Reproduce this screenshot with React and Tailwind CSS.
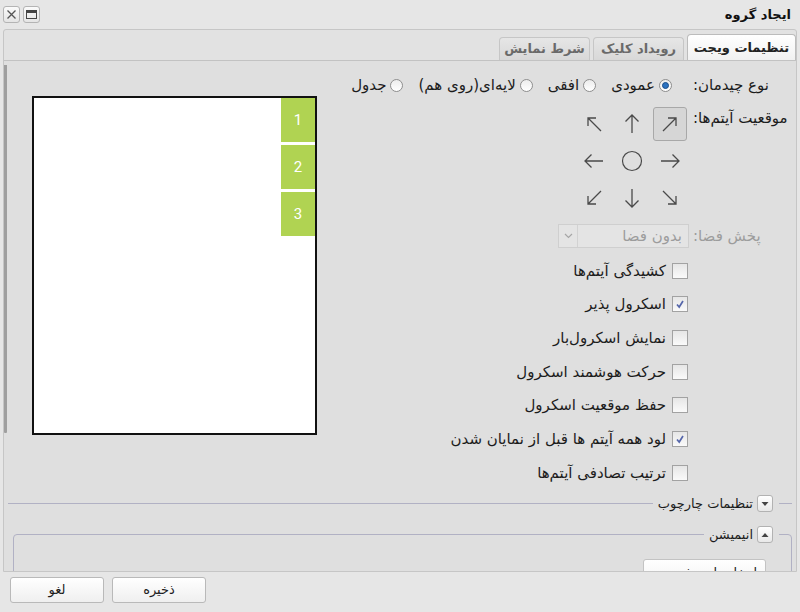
import React from 'react';

const font = "font-['DejaVu_Sans','Noto_Sans',sans-serif]";

const TitleBtn = ({ children }) => (
  <div className="w-[17px] h-[17px] rounded-[3px] border border-[#b4b4b4] bg-gradient-to-b from-[#fbfbfb] to-[#e4e4e4] flex items-center justify-center">
    {children}
  </div>
);

const Tab = ({ active, children }) => (
  <div
    className={
      active
        ? 'h-[26px] w-[109px] rounded-t-[4px] border border-b-0 border-[#bcbcbc] bg-gradient-to-b from-[#ffffff] to-[#f1f1f1] flex items-center justify-center font-bold text-[13px] text-[#222]'
        : 'h-[23px] w-[91px] rounded-t-[4px] border border-b-0 border-[#c6c6c6] bg-gradient-to-b from-[#e6e6e6] to-[#d8d8d8] flex items-center justify-center font-bold text-[13px] text-[#6a6a6a]'
    }
  >
    <span dir="rtl">{children}</span>
  </div>
);

const Radio = ({ checked, label }) => (
  <div className="flex items-center gap-[4px]">
    <div className="w-[13px] h-[13px] rounded-full border border-[#8e8e8e] bg-gradient-to-b from-[#ececec] to-[#ffffff] flex items-center justify-center">
      {checked && <div className="w-[7px] h-[7px] rounded-full bg-[#2c72c0] border border-[#174d8a]" />}
    </div>
    <span>{label}</span>
  </div>
);

const Check = ({ checked, label }) => (
  <div className="h-[33.67px] flex items-center gap-[6px] mr-[103px]">
    <div className="w-[16px] h-[16px] border border-[#a2a2a2] bg-gradient-to-b from-[#e6e6e6] to-[#fafafa] flex items-center justify-center">
      {checked && (
        <svg width="12" height="12" viewBox="0 0 12 12">
          <path d="M3 6.5 L5.2 9 L9 3" fill="none" stroke="#5566aa" strokeWidth="1.7" />
        </svg>
      )}
    </div>
    <span>{label}</span>
  </div>
);

const Arrow = ({ d, selected, circle }) => (
  <div
    className={
      'w-[34px] h-[34px] flex items-center justify-center rounded-[3px] ' +
      (selected ? 'border border-[#a8a8a8] bg-[#d6d6d6]' : '')
    }
  >
    <svg width="22" height="22" viewBox="0 0 22 22">
      {circle ? (
        <circle cx="11" cy="11" r="9.5" fill="none" stroke="#4a4a4a" strokeWidth="1.2" />
      ) : (
        <path d={d} fill="none" stroke="#4a4a4a" strokeWidth="1.3" />
      )}
    </svg>
  </div>
);

const arrows = [
  { d: 'M18 18 L5 5 M5 13 V5 H13' },
  { d: 'M11 20 V2 M4.5 8.5 L11 2 L17.5 8.5' },
  { d: 'M4 18 L17 5 M9 5 H17 V13', selected: true },
  { d: 'M20 11 H2 M8.5 4.5 L2 11 L8.5 17.5' },
  { circle: true },
  { d: 'M2 11 H20 M13.5 4.5 L20 11 L13.5 17.5' },
  { d: 'M18 4 L5 17 M5 9 V17 H13' },
  { d: 'M11 2 V20 M4.5 13.5 L11 20 L17.5 13.5' },
  { d: 'M4 4 L17 17 M17 9 V17 H9' },
];

const Collapse = ({ up }) => (
  <div className="w-[16px] h-[17px] rounded-[3px] border border-[#b2b2b2] bg-gradient-to-b from-[#ffffff] to-[#e8e8e8] flex items-center justify-center">
    <svg width="8" height="6" viewBox="0 0 8 6">
      <path d={up ? 'M0.5 5 L4 1 L7.5 5 Z' : 'M0.5 1 L4 5 L7.5 1 Z'} fill="#444" />
    </svg>
  </div>
);

const Button = ({ children }) => (
  <div className="h-[26px] w-[94px] rounded-[3px] border border-[#b9b9b9] bg-gradient-to-b from-[#ffffff] to-[#efefef] flex items-center justify-center">
    <span dir="rtl">{children}</span>
  </div>
);

export default function App() {
  return (
    <div className={`w-[800px] h-[612px] bg-[#e6e6e6] flex flex-col overflow-hidden text-[13px] text-[#1c1c1c] ${font}`}>
      {/* title bar */}
      <div className="h-[29px] flex items-center justify-between pl-[3px] pr-[9px]">
        <div className="flex gap-[3px]">
          <TitleBtn>
            <svg width="11" height="11" viewBox="0 0 11 11">
              <path d="M1.5 1.5 L9.5 9.5 M9.5 1.5 L1.5 9.5" stroke="#555" strokeWidth="1.3" />
            </svg>
          </TitleBtn>
          <TitleBtn>
            <div className="w-[11px] h-[9px] border border-[#444] border-t-[3px]" />
          </TitleBtn>
        </div>
        <div dir="rtl" className="font-bold text-[#111]">ایجاد گروه</div>
      </div>

      {/* tab widget */}
      <div className="mx-[3px] h-[543px] border border-[#c6c6c6] rounded-t-[3px] bg-[#e2e2e2] flex flex-col overflow-hidden">
        <div className="h-[30px] flex items-end justify-end gap-[3px]">
          <Tab>شرط نمایش</Tab>
          <Tab>رویداد کلیک</Tab>
          <Tab active>تنظیمات ویجت</Tab>
        </div>

        <div className="flex-1 border-t border-[#c2c2c2] bg-[#dfdfdf] flex overflow-hidden text-[15px]">
          {/* scrollbar */}
          <div className="w-[3px] mt-[4px] h-[368px] bg-[#9f9f9f] rounded-b-[1px]" />

          <div className="flex-1 flex flex-col">
            {/* top section */}
            <div className="h-[429px] flex">
              <div className="ml-[25px] mt-[35px] w-[285px] h-[339px] border-2 border-[#111] bg-white flex justify-end">
                <div className="flex flex-col gap-[3px]">
                  {[1, 2, 3].map((n) => (
                    <div
                      key={n}
                      className="w-[34px] h-[44px] bg-[#b0d352] text-white text-[15px] font-['Roboto',sans-serif] flex items-center justify-center"
                    >
                      {n}
                    </div>
                  ))}
                </div>
              </div>

              <div dir="rtl" className="flex-1 flex flex-col pr-[5px]">
                {/* layout type */}
                <div className="mt-[14px] h-[20px] flex items-center gap-[4px]">
                  <div className="w-[98px] text-left">نوع چیدمان:</div>
                  <div className="mr-[17px] flex items-center gap-[15px]">
                    <Radio checked label="عمودی" />
                    <Radio label="افقی" />
                    <Radio label="لایه‌ای(روی هم)" />
                    <Radio label="جدول" />
                  </div>
                </div>

                {/* item position */}
                <div className="mt-[12px] flex gap-[4px]">
                  <div className="w-[98px] text-left leading-[20px] mt-[1px] whitespace-nowrap">موقعیت آیتم‌ها:</div>
                  <div dir="ltr" className="mr-[2px] grid grid-cols-[34px_34px_34px] gap-x-[4px] gap-y-[3px]">
                    {arrows.map((a, i) => (
                      <Arrow key={i} {...a} />
                    ))}
                  </div>
                </div>

                {/* spacing */}
                <div className="mt-[9px] h-[24px] flex items-center gap-[4px]">
                  <div className="w-[98px] text-left text-[#9c9c9c]">پخش فضا:</div>
                  <div className="w-[131px] h-[24px] border border-[#cfcfcf] bg-[#e4e4e4] flex">
                    <div className="flex-1 flex items-center pr-[6px] text-[#9c9c9c]">بدون فضا</div>
                    <div className="w-[19px] border-r border-[#d2d2d2] flex items-center justify-center">
                      <svg width="9" height="6" viewBox="0 0 9 6">
                        <path d="M1 1 L4.5 4.5 L8 1" fill="none" stroke="#a6a6a6" strokeWidth="1.2" />
                      </svg>
                    </div>
                  </div>
                </div>

                {/* checkboxes */}
                <div className="mt-[6px] flex flex-col">
                  <Check label="کشیدگی آیتم‌ها" />
                  <Check checked label="اسکرول پذیر" />
                  <Check label="نمایش اسکرول‌بار" />
                  <Check label="حرکت هوشمند اسکرول" />
                  <Check label="حفظ موقعیت اسکرول" />
                  <Check checked label="لود همه آیتم ها قبل از نمایان شدن" />
                  <Check label="ترتیب تصادفی آیتم‌ها" />
                </div>
              </div>
            </div>

            {/* frame settings (collapsed) */}
            <div dir="rtl" className="mt-[5px] h-[18px] flex items-center pr-[4px] pl-[1px] text-[13px]">
              <div className="w-[13px] h-px bg-[#b1b1c4]" />
              <div className="mr-[6px]">
                <Collapse />
              </div>
              <div className="mr-[4px]">تنظیمات چارچوب</div>
              <div className="mr-[5px] flex-1 h-px bg-[#b1b1c4]" />
            </div>

            {/* animation (expanded) */}
            <fieldset dir="rtl" className="mt-[13px] ml-[6px] mr-[4px] h-[80px] border border-[#b1b1c4] rounded-[4px] pr-[12px] text-[13px]">
              <legend className="pr-[6px] pl-[5px]">
                <div className="flex items-center gap-[4px] h-[18px]">
                  <Collapse up />
                  <span>انیمیشن</span>
                </div>
              </legend>
              <div className="mt-[15px] mr-[13px] w-[123px] h-[26px] rounded-[3px] border border-[#c3c3c3] bg-gradient-to-b from-[#ffffff] to-[#f2f2f2] pr-[8px] pt-[3px]">
                انتخاب انیمیشن
              </div>
            </fieldset>
          </div>
        </div>
      </div>

      {/* bottom buttons */}
      <div className="mt-[5px] ml-[10px] flex gap-[8px]">
        <Button>لغو</Button>
        <Button>ذخیره</Button>
      </div>
    </div>
  );
}
